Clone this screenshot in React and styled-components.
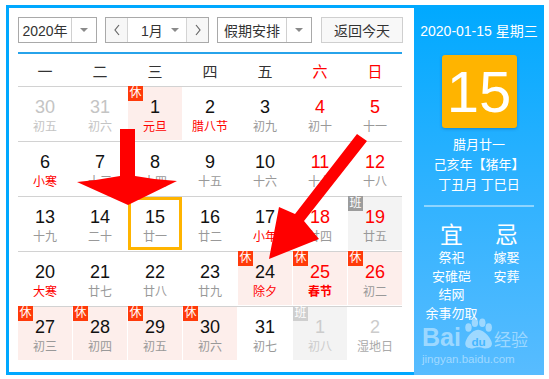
import React from 'react';
import styled, { createGlobalStyle } from 'styled-components';

const GlobalStyle = createGlobalStyle`
  html, body {
    margin: 0;
    padding: 0;
    background: #fff;
  }
  body {
    font-family: "Liberation Sans", "Noto Sans CJK SC", sans-serif;
    color: #333;
  }
`;

const Page = styled.div`
  position: relative;
  width: 549px;
  height: 379px;
  padding: 5px 0 0 6px;
  box-sizing: border-box;
`;

const Frame = styled.div`
  display: flex;
  width: 538px;
  height: 370px;
`;

const Main = styled.div`
  width: 408px;
  box-sizing: border-box;
  border: 3px solid #00a8ff;
  border-right: none;
  padding: 9px 0 0 9px;
  background: #fff;
`;

const Toolbar = styled.div`
  display: flex;
  height: 26px;
  gap: 8px;
`;

const Select = styled.div`
  display: flex;
  width: ${p => p.$w}px;
  box-sizing: border-box;
  border: 1px solid #a9a9a9;
  background: #fff;
  font-size: 14px;
  color: #333;
`;

const SelectText = styled.div`
  flex: 1;
  display: flex;
  align-items: center;
  justify-content: center;
`;

const Caret = styled.div`
  width: ${p => p.$w || 24}px;
  border-left: ${p => (p.$line ? '1px solid #d0d0d0' : 'none')};
  display: flex;
  align-items: center;
  justify-content: center;

  &::after {
    content: '';
    border-left: 4px solid transparent;
    border-right: 4px solid transparent;
    border-top: 4px solid #8a8a8a;
  }
`;

const MonthGroup = styled.div`
  display: flex;
  width: 104px;
  box-sizing: border-box;
  border: 1px solid #a9a9a9;
  font-size: 14px;
`;

const NavBtn = styled.div`
  width: 21px;
  background: #f7f7f7;
  display: flex;
  align-items: center;
  justify-content: center;
  border-left: ${p => (p.$side === 'r' ? '1px solid #d4d4d4' : 'none')};
  border-right: ${p => (p.$side === 'l' ? '1px solid #d4d4d4' : 'none')};
`;

const MonthBody = styled.div`
  flex: 1;
  display: flex;
  align-items: center;
  padding-left: 13px;
`;

const TodayBtn = styled.div`
  width: 82px;
  margin-left: 1px;
  box-sizing: border-box;
  border: 1px solid #cfcfcf;
  background: #f8f8f8;
  display: flex;
  align-items: center;
  justify-content: center;
  font-size: 14px;
  color: #333;
`;

const Rule = styled.div`
  width: 384px;
  height: 2px;
  margin-top: 9px;
  background: #27a3ea;
`;

const Week = styled.div`
  display: grid;
  grid-template-columns: repeat(7, 54px);
  column-gap: 1px;
  height: 32px;
  align-items: center;
  text-align: center;
  font-size: 15px;
`;

const WeekDay = styled.div`
  color: ${p => (p.$red ? '#f00' : '#333')};
`;

const Row = styled.div`
  display: grid;
  grid-template-columns: repeat(7, 54px);
  column-gap: 1px;
  width: 384px;
  border-top: 1px solid #d2d2d2;
  padding-bottom: 1px;
`;

const bgFor = kind => {
  if (kind === 'rest') return '#fdeeeb';
  if (kind === 'work') return '#f3f3f3';
  return '#fff';
};

const Cell = styled.div`
  position: relative;
  height: 53px;
  box-sizing: border-box;
  padding-top: ${p => (p.$sel ? 6 : 9)}px;
  background: ${p => bgFor(p.$kind)};
  border: ${p => (p.$sel ? '3px solid #ffb400' : 'none')};
  text-align: center;
`;

const Num = styled.div`
  font-size: 18px;
  line-height: 22px;
  color: ${p => p.$c};
`;

const Lunar = styled.div`
  font-size: 12px;
  line-height: 18px;
  color: ${p => p.$c};
  font-weight: ${p => (p.$bold ? 700 : 400)};
`;

const Badge = styled.div`
  position: absolute;
  top: -1px;
  left: 0;
  width: 15px;
  height: 15px;
  background: ${p => p.$bg};
  color: #fff;
  font-size: 12px;
  line-height: 15px;
  text-align: center;
`;

const Side = styled.div`
  position: relative;
  width: 130px;
  height: 370px;
  background: linear-gradient(180deg, #00a9ff 0%, #2fb2ff 50%, #58bcff 100%);
  color: #fff;
  display: flex;
  flex-direction: column;
  align-items: center;
  padding-top: 17px;
  box-sizing: border-box;
`;

const DateLine = styled.div`
  font-size: 14px;
  line-height: 18px;
`;

const DayBox = styled.div`
  width: 75px;
  height: 73px;
  margin-top: 15px;
  background: #ffb400;
  border-radius: 3px;
  box-shadow: 0 1px 3px rgba(0, 60, 120, 0.35);
  display: flex;
  align-items: center;
  justify-content: center;
  font-size: 58px;
  line-height: 1;
`;

const LunarInfo = styled.div`
  margin-top: 7px;
  font-size: 13px;
  line-height: 20px;
  text-align: center;
  white-space: pre;
`;

const Divider = styled.div`
  width: 110px;
  height: 2px;
  margin-top: 10px;
  background: rgba(255, 255, 255, 0.45);
`;

const YiJi = styled.div`
  display: grid;
  grid-template-columns: 55px 55px;
  margin-top: 14px;
  text-align: center;
`;

const Head = styled.div`
  font-size: 23px;
  line-height: 28px;
`;

const Item = styled.div`
  font-size: 13px;
  line-height: 18.5px;
  white-space: nowrap;
`;

const Watermark = styled.div`
  position: absolute;
  left: 8px;
  bottom: 8px;
  color: rgba(255, 255, 255, 0.45);
`;

const WmTop = styled.div`
  display: flex;
  align-items: flex-end;
  font-size: 25px;
  font-weight: 700;
  line-height: 26px;
  font-family: "Liberation Sans", sans-serif;
`;

const WmCn = styled.span`
  font-size: 17px;
  font-weight: 400;
  font-family: "Noto Sans CJK SC", sans-serif;
  line-height: 22px;
  margin-left: 1px;
`;

const WmUrl = styled.div`
  font-size: 11.5px;
  line-height: 16px;
  margin-top: 1px;
`;

const Overlay = styled.svg`
  position: absolute;
  left: 0;
  top: 0;
  pointer-events: none;
`;

const RED = '#f00';
const GRAY = '#999';
const LIGHT = '#c4c4c4';

const rows = [
  [
    { n: 30, l: '初五', nc: LIGHT, lc: LIGHT },
    { n: 31, l: '初六', nc: LIGHT, lc: LIGHT },
    { n: 1, l: '元旦', lc: RED, kind: 'rest', badge: '休' },
    { n: 2, l: '腊八节', lc: RED },
    { n: 3, l: '初九' },
    { n: 4, l: '初十', nc: RED },
    { n: 5, l: '十一', nc: RED },
  ],
  [
    { n: 6, l: '小寒', lc: RED },
    { n: 7, l: '十三' },
    { n: 8, l: '十四' },
    { n: 9, l: '十五' },
    { n: 10, l: '十六' },
    { n: 11, l: '十七', nc: RED },
    { n: 12, l: '十八', nc: RED },
  ],
  [
    { n: 13, l: '十九' },
    { n: 14, l: '二十' },
    { n: 15, l: '廿一', sel: true },
    { n: 16, l: '廿二' },
    { n: 17, l: '小年', lc: RED },
    { n: 18, l: '廿四', nc: RED },
    { n: 19, l: '廿五', nc: RED, kind: 'work', badge: '班' },
  ],
  [
    { n: 20, l: '大寒', lc: RED },
    { n: 21, l: '廿七' },
    { n: 22, l: '廿八' },
    { n: 23, l: '廿九' },
    { n: 24, l: '除夕', lc: RED, kind: 'rest', badge: '休' },
    { n: 25, l: '春节', nc: RED, lc: RED, bold: true, kind: 'rest', badge: '休' },
    { n: 26, l: '初二', nc: RED, kind: 'rest', badge: '休' },
  ],
  [
    { n: 27, l: '初三', kind: 'rest', badge: '休' },
    { n: 28, l: '初四', kind: 'rest', badge: '休' },
    { n: 29, l: '初五', kind: 'rest', badge: '休' },
    { n: 30, l: '初六', kind: 'rest', badge: '休' },
    { n: 31, l: '初七' },
    { n: 1, l: '初八', nc: '#ccc', lc: '#ccc', kind: 'work', badge: '班', faded: true },
    { n: 2, l: '湿地日', nc: '#ccc', lc: '#aaa' },
  ],
];

const badgeColor = d => {
  if (d.badge === '休') return '#ff3a0a';
  return d.faded ? '#cfcfcf' : '#9c9c9c';
};

const weekDays = ['一', '二', '三', '四', '五', '六', '日'];

const Chevron = ({ dir }) => (
  <svg width="8" height="12" viewBox="0 0 8 12">
    <path
      d={dir === 'l' ? 'M6 1 L2 6 L6 11' : 'M2 1 L6 6 L2 11'}
      fill="none"
      stroke="#666"
      strokeWidth="1.2"
    />
  </svg>
);

const App = () => (
  <Page>
    <GlobalStyle />
    <Frame>
      <Main>
        <Toolbar>
          <Select $w={79}>
            <SelectText>2020年</SelectText>
            <Caret $line />
          </Select>
          <MonthGroup>
            <NavBtn $side="l"><Chevron dir="l" /></NavBtn>
            <MonthBody>1月</MonthBody>
            <Caret $w={22} />
            <NavBtn $side="r"><Chevron dir="r" /></NavBtn>
          </MonthGroup>
          <Select $w={95}>
            <SelectText>假期安排</SelectText>
            <Caret $line />
          </Select>
          <TodayBtn>返回今天</TodayBtn>
        </Toolbar>
        <Rule />
        <Week>
          {weekDays.map((w, i) => (
            <WeekDay key={w} $red={i > 4}>{w}</WeekDay>
          ))}
        </Week>
        {rows.map((row, ri) => (
          <Row key={ri}>
            {row.map((d, ci) => (
              <Cell key={ci} $kind={d.kind} $sel={d.sel}>
                {d.badge && <Badge $bg={badgeColor(d)}>{d.badge}</Badge>}
                <Num $c={d.nc || '#111'}>{d.n}</Num>
                <Lunar $c={d.lc || GRAY} $bold={d.bold}>{d.l}</Lunar>
              </Cell>
            ))}
          </Row>
        ))}
      </Main>
      <Side>
        <DateLine>2020-01-15 星期三</DateLine>
        <DayBox>15</DayBox>
        <LunarInfo>{'腊月廿一\n己亥年【猪年】\n丁丑月 丁巳日'}</LunarInfo>
        <Divider />
        <YiJi>
          <div>
            <Head>宜</Head>
            <Item>祭祀</Item>
            <Item>安碓硙</Item>
            <Item>结网</Item>
            <Item>余事勿取</Item>
          </div>
          <div>
            <Head>忌</Head>
            <Item>嫁娶</Item>
            <Item>安葬</Item>
          </div>
        </YiJi>
        <Watermark>
          <WmTop>
            Bai
            <svg width="32" height="32" viewBox="0 0 30 30">
              <g fill="rgba(255,255,255,0.45)">
                <ellipse cx="7" cy="9" rx="3" ry="4" />
                <ellipse cx="13" cy="4.5" rx="3" ry="4" />
                <ellipse cx="20" cy="4.5" rx="3" ry="4" />
                <ellipse cx="26" cy="9" rx="3" ry="4" />
                <path d="M16 11 C10 11 4 20 4 24 C4 28 8 29 11 28.5 C13 28 15 27.5 16.5 27.5 C18 27.5 20 28 22 28.5 C25 29 29 28 29 24 C29 20 22 11 16 11 Z" />
              </g>
              <text x="16.5" y="26" textAnchor="middle" fontSize="11" fontWeight="700" fill="#44b6ff" fontFamily="Liberation Sans, sans-serif">du</text>
            </svg>
            <WmCn>经验</WmCn>
          </WmTop>
          <WmUrl>jingyan.baidu.com</WmUrl>
        </Watermark>
      </Side>
    </Frame>
    <Overlay width="549" height="379" viewBox="0 0 549 379">
      <path d="M120 129 L135 129 L135 176 Q156 180 177 181 L128 205 L77 182 Q99 180 120 176 Z" fill="#f00" />
      <path d="M357 134 L367 141 L304 221 L319 239 L269 259 L279 207 L295 214 Z" fill="#f00" />
    </Overlay>
  </Page>
);

export default App;
